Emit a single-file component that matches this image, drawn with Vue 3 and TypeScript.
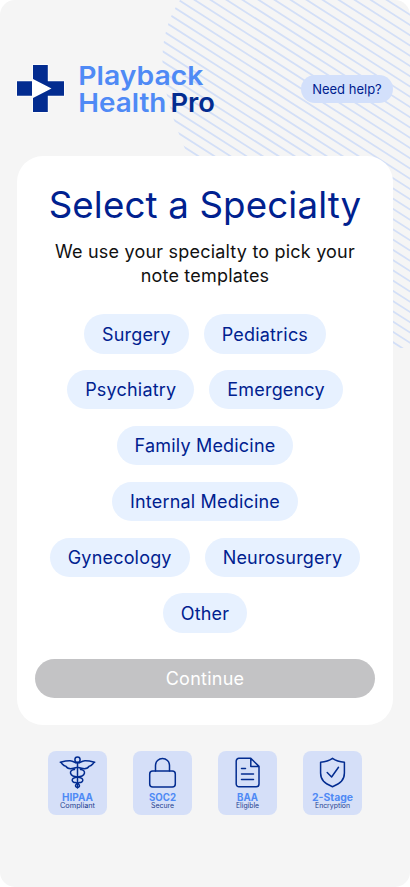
<script setup lang="ts">
import { ref } from 'vue'

const rows: string[][] = [
  ['Surgery', 'Pediatrics'],
  ['Psychiatry', 'Emergency'],
  ['Family Medicine'],
  ['Internal Medicine'],
  ['Gynecology', 'Neurosurgery'],
  ['Other'],
]

interface Badge {
  icon: 'caduceus' | 'lock' | 'document' | 'shield'
  title: string
  note: string
  titleWidth: number
  noteWidth: number
}

const badges: Badge[] = [
  { icon: 'caduceus', title: 'HIPAA', note: 'Compliant', titleWidth: 31, noteWidth: 35 },
  { icon: 'lock', title: 'SOC2', note: 'Secure', titleWidth: 27, noteWidth: 23 },
  { icon: 'document', title: 'BAA', note: 'Eligible', titleWidth: 21, noteWidth: 23 },
  { icon: 'shield', title: '2-Stage', note: 'Encryption', titleWidth: 41, noteWidth: 35 },
]

const selected = ref<string | null>(null)

// Parallel diagonal stripes, 10.25px apart vertically.
const stripes = Array.from({ length: 50 }, (_, i) => {
  const y = 0.2 + (i - 16) * 10.25
  return `M155 ${y - 5.12}L415 ${y + 161.28}`
}).join('')
</script>

<template>
  <main class="screen">
    <svg class="stripes" viewBox="0 0 410 350" aria-hidden="true">
      <clipPath id="stripe-area">
        <path d="M180 0C166 22 162 42 162.500 63C164 98 177 130 188 156L300 348H410V0Z" />
      </clipPath>
      <path :d="stripes" clip-path="url(#stripe-area)" />
    </svg>

    <header class="header">
      <svg class="logo" viewBox="0 0 200 60" role="img">
        <path class="halo" d="M15.300 4.300H31.500V20.500H47.700V36.500H31.500V52.700H15.300V36.500H-.7V20.500H15.300Z" />
        <path class="cross" d="M16 5H30.800V21.200H47V35.800H30.800V52H16V38L34.500 28.500L16 19ZM0 21.200H15V35.800H0Z" />
        <g class="wordmark">
          <text x="61.300" y="25" textLength="125" lengthAdjust="spacingAndGlyphs">Playback</text>
          <text x="61.300" y="52" textLength="88" lengthAdjust="spacingAndGlyphs">Health</text>
          <text class="pro" x="153.500" y="52" textLength="44.500" lengthAdjust="spacingAndGlyphs">Pro</text>
        </g>
      </svg>
      <button class="help" type="button">Need help?</button>
    </header>

    <section class="card">
      <h1>Select a Specialty</h1>
      <p>We use your specialty to pick your<br />note templates</p>
      <div class="chips">
        <div v-for="(row, i) in rows" :key="i" class="row">
          <button v-for="name in row" :key="name" class="chip" type="button" @click="selected = name">{{ name }}</button>
        </div>
      </div>
      <button class="continue" type="button">Continue</button>
    </section>

    <footer class="badges">
      <div v-for="b in badges" :key="b.title" class="badge">
        <svg viewBox="0 0 59 64">
          <g class="icon">
            <g v-if="b.icon === 'caduceus'">
              <circle cx="29.500" cy="8.700" r="2.600" />
              <path d="M29.500 11.500V37" />
              <path d="M28.300 12C24 10 23.500 8.500 12.300 11.200C14.500 12.300 14.600 15 17.800 15.200C19.500 18.500 24 18 28.500 16.500M30.700 12C35 10 35.500 8.500 46.700 11.200C44.500 12.300 44.400 15 41.200 15.200C39.500 18.500 35 18 30.500 16.500" />
              <path d="M26.500 18.500C20.500 19 21 25.500 29.500 26C37 27 35.500 31.500 31.500 31.500M32.500 18.500C38.500 19 38 25.500 29.500 26C22 27 23.500 31.500 27.500 31.500M27.500 31.500C31.500 32 33 36 29.500 36.500C26 36 27.500 32 31.500 31.500" />
            </g>
            <g v-else-if="b.icon === 'lock'">
              <rect x="16.700" y="19.900" width="25.600" height="16" rx="3" />
              <path d="M22.500 19.900V14.500A7 7 0 0 1 36.500 14.500V19.900" />
            </g>
            <g v-else-if="b.icon === 'document'">
              <path d="M21 7.300H32.800L41 15.400V33A2.800 2.800 0 0 1 38.200 35.800H21A2.800 2.800 0 0 1 18.200 33V10.100A2.800 2.800 0 0 1 21 7.300ZM32.800 7.300V15.400H41M23.500 17.400H27.500M23.500 23H35.500M23.500 28.500H35.500" />
            </g>
            <g v-else>
              <path d="M29.500 7.300C33.500 10.200 37 10.900 41.400 11.200V22C41.400 29 37.500 32.500 29.500 35.700C21.500 32.500 17.600 29 17.600 22V11.200C22 10.900 25.500 10.200 29.500 7.300Z" />
              <path d="M24.200 21.500L28.600 26L35.500 16.300" />
            </g>
          </g>
          <text class="title" x="29.500" y="49.500" :textLength="b.titleWidth" lengthAdjust="spacingAndGlyphs">{{ b.title }}</text>
          <text class="note" x="29.500" y="57" :textLength="b.noteWidth" lengthAdjust="spacingAndGlyphs">{{ b.note }}</text>
        </svg>
      </div>
    </footer>
  </main>
</template>

<style>
body {
  background: #fff;
}
</style>

<style scoped>
.screen {
  position: relative;
  box-sizing: border-box;
  width: 410px;
  height: 887px;
  padding: 60px 17.3px 0;
  overflow: hidden;
  border-radius: 15px;
  background: #f5f5f5;
  font-family: Inter, 'Liberation Sans', sans-serif;
  color: #00218f;
}
.stripes {
  position: absolute;
  top: 0;
  left: 0;
  width: 410px;
  height: 350px;
  fill: none;
  stroke: #d3dff7;
  stroke-width: 1.8;
}
.header {
  position: relative;
  display: flex;
  justify-content: space-between;
  height: 95.7px;
}
.logo {
  width: 200px;
  height: 60px;
  overflow: visible;
}
.halo {
  fill: #fff;
}
.cross {
  fill: #032c90;
}
.wordmark {
  font-size: 26.2px;
  font-weight: 600;
  fill: #4f8af5;
}
.wordmark .pro {
  fill: #032c90;
}
button {
  border: 0;
  padding: 0;
  font: inherit;
  color: inherit;
}
.help {
  margin-top: 14.5px;
  width: 91.5px;
  height: 28px;
  border-radius: 14px;
  background: #d3e0fb;
  font-size: 13px;
}
.card {
  position: relative;
  box-sizing: border-box;
  height: 569px;
  padding: 26.3px 17.5px 0;
  border-radius: 26px;
  background: #fff;
  text-align: center;
}
h1 {
  margin: 0;
  font-size: 36.7px;
  line-height: 46px;
  font-weight: 400;
  letter-spacing: 0.15px;
  white-space: nowrap;
}
p {
  margin: 12.3px 0 0;
  color: #111;
  font-size: 18px;
  line-height: 24px;
  letter-spacing: 0.2px;
}
.chips {
  display: flex;
  flex-direction: column;
  gap: 16.5px;
  margin-top: 26.1px;
}
.row {
  display: flex;
  justify-content: center;
  gap: 15px;
}
.chip {
  height: 39.3px;
  padding: 0 18px;
  border-radius: 20px;
  background: #e7f1ff;
  font-size: 18px;
  letter-spacing: 0.19px;
}
.continue {
  width: 340px;
  height: 39.3px;
  margin-top: 26px;
  border-radius: 20px;
  background: #c3c3c5;
  color: #fff;
  font-size: 18px;
  letter-spacing: 0.25px;
}
.badges {
  display: flex;
  justify-content: center;
  gap: 26.3px;
  margin-top: 26px;
}
.badge {
  width: 59px;
  height: 64px;
  border-radius: 8px;
  background: #d5dff8;
}
.badge svg {
  display: block;
  width: 59px;
  height: 64px;
}
.icon {
  fill: none;
  stroke: #032c90;
  stroke-width: 1.5;
  stroke-linecap: round;
  stroke-linejoin: round;
}
.title {
  text-anchor: middle;
  fill: #4f8af5;
  font-size: 10px;
  font-weight: 700;
}
.note {
  text-anchor: middle;
  fill: #23408f;
  font-size: 7px;
}
</style>
